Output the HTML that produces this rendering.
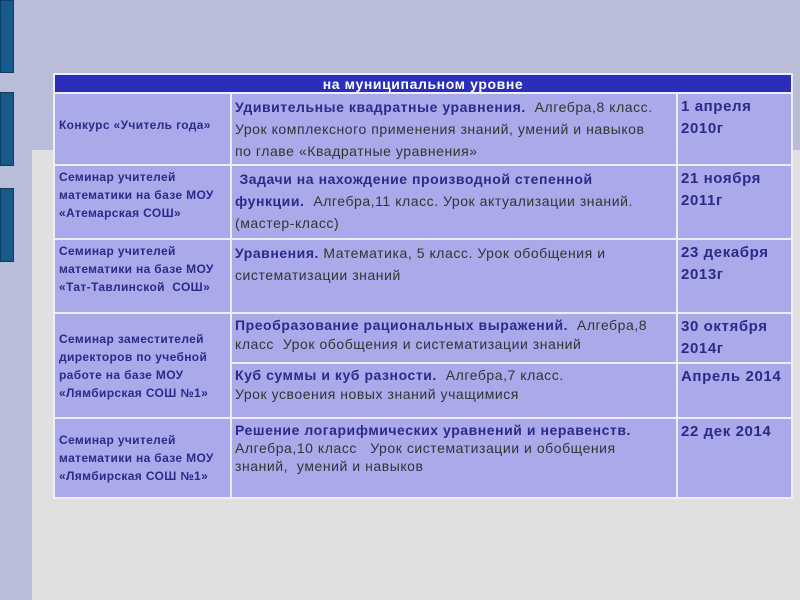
<!DOCTYPE html>
<html><head><meta charset="utf-8"><style>
body{margin:0;width:800px;height:600px;background:#b9bdd7;position:relative;overflow:hidden;font-family:"Liberation Sans",sans-serif}
.sq{position:absolute;left:0;width:14px;background:#155a8a;border:1px solid #0d3d60;box-sizing:border-box}
.gray{position:absolute;left:32px;top:150px;right:0;bottom:0;background:#e0e0e0}
table{position:absolute;left:53px;top:73px;width:738px;border-collapse:collapse;table-layout:fixed}
td{border:2px solid #eeeef8;background:#aaaaea;vertical-align:top;padding:2px 3px;color:#333;font-size:14px;line-height:22px;white-space:nowrap;letter-spacing:0.55px;overflow:hidden}
th{background:#2b2eb8;color:#fff;font-size:14px;height:17px;border:2px solid #eeeef8;padding:0;letter-spacing:0.6px}
.c1{font-size:12px;font-weight:bold;color:#2a2a8a;line-height:18px;padding-left:4px;letter-spacing:0.35px}
.b{font-weight:bold;color:#2a2a8a}
.c3{font-weight:bold;color:#2a2a8a;font-size:15px;letter-spacing:0.6px}
</style></head><body>
<div class="sq" style="top:0;height:73px"></div>
<div class="sq" style="top:92px;height:74px"></div>
<div class="sq" style="top:188px;height:74px"></div>
<div class="gray"></div>
<table>
<colgroup><col style="width:177px"><col style="width:446px"><col style="width:115px"></colgroup>
<tr><th colspan="3">на муниципальном уровне</th></tr>
<tr style="height:68px"><td class="c1" style="vertical-align:middle;padding-bottom:10px">Конкурс «Учитель года»</td><td><span class="b">Удивительные квадратные уравнения.</span>&nbsp; Алгебра,8 класс.<br>Урок комплексного применения знаний, умений и навыков<br>по главе «Квадратные уравнения»</td><td class="c3">1 апреля<br>2010г</td></tr>
<tr style="height:74px"><td class="c1">Семинар учителей<br>математики на базе МОУ<br>«Атемарская СОШ»</td><td><span class="b">&nbsp;Задачи на нахождение производной степенной<br>функции.</span>&nbsp; Алгебра,11 класс. Урок актуализации знаний.<br>(мастер-класс)</td><td class="c3">21 ноября<br>2011г</td></tr>
<tr style="height:74px"><td class="c1">Семинар учителей<br>математики на базе МОУ<br>«Тат-Тавлинской&nbsp; СОШ»</td><td><span class="b">Уравнения.</span> Математика, 5 класс. Урок обобщения и<br>систематизации знаний</td><td class="c3">23 декабря<br>2013г</td></tr>
<tr style="height:48px"><td class="c1" rowspan="2" style="vertical-align:middle">Семинар заместителей<br>директоров по учебной<br>работе на базе МОУ<br>«Лямбирская СОШ №1»</td><td style="line-height:19px"><span class="b">Преобразование рациональных выражений.</span>&nbsp; Алгебра,8<br>класс&nbsp; Урок обобщения и систематизации знаний</td><td class="c3">30 октября<br>2014г</td></tr>
<tr style="height:55px"><td style="line-height:19px"><span class="b">Куб суммы и куб разности.</span>&nbsp; Алгебра,7 класс.<br>Урок усвоения новых знаний учащимися</td><td class="c3">Апрель 2014</td></tr>
<tr style="height:80px"><td class="c1" style="vertical-align:middle">Семинар учителей<br>математики на базе МОУ<br>«Лямбирская СОШ №1»</td><td style="line-height:18px"><span class="b">Решение логарифмических уравнений и неравенств.</span><br>Алгебра,10 класс&nbsp;&nbsp; Урок систематизации и обобщения<br>знаний,&nbsp; умений и навыков</td><td class="c3">22 дек 2014</td></tr>
</table>
</body></html>
